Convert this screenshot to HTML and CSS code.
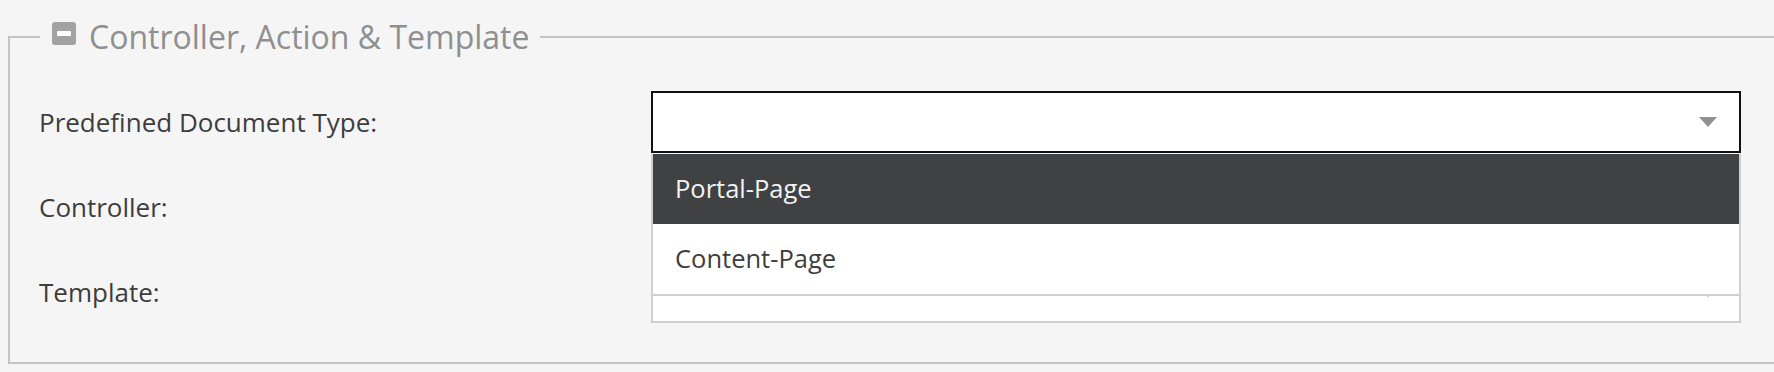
FILE: index.html
```html
<!DOCTYPE html>
<html lang="en">
<head>
<meta charset="utf-8">
<title>Controller, Action &amp; Template</title>
<link rel="stylesheet" href="styles.css">
</head>
<body>
<fieldset class="panel">
  <legend class="panel-legend">
    <span class="collapse-icon"><span class="collapse-bar"></span></span>
    <span class="panel-title">Controller, Action &amp; Template</span>
  </legend>
  <div class="form-grid">
    <label class="field-label">Predefined Document Type:</label>
    <div class="field-wrap">
      <div class="select select-focused"><span class="select-arrow"></span></div>
      <ul class="dropdown">
        <li class="dropdown-item dropdown-item-active">Portal-Page</li>
        <li class="dropdown-item">Content-Page</li>
      </ul>
    </div>
    <label class="field-label">Controller:</label>
    <div class="field-wrap">
      <div class="select"><span class="select-arrow"></span></div>
    </div>
    <label class="field-label">Template:</label>
    <div class="field-wrap">
      <div class="select"><span class="select-arrow"></span></div>
    </div>
  </div>
</fieldset>
</body>
</html>
```
FILE: styles.css
```css
html, body {
  margin: 0;
  padding: 0;
  background: #f5f5f5;
  overflow: hidden;
}

body {
  font-family: "Open Sans", "Noto Sans", sans-serif;
  color: #3d3d3d;
  padding-top: 17px;
}

.panel {
  box-sizing: border-box;
  width: calc(100vw - 4px);
  margin: 0 0 0 8px;
  padding: 34px 35px 39px 29px;
  border: 2px solid #c4c4c4;
  min-width: 0;
}

.panel-legend {
  display: flex;
  align-items: flex-start;
  margin-left: 1px;
  padding: 0 11px 0 12px;
  height: 40px;
}

.collapse-icon {
  display: flex;
  align-items: center;
  justify-content: center;
  width: 24px;
  height: 23px;
  margin-top: 5px;
  border-radius: 3px;
  background: #a2a2a2;
}

.collapse-bar {
  display: block;
  width: 14px;
  height: 5px;
  background: #ffffff;
  border-radius: 1px;
}

.panel-title {
  margin-left: 13px;
  font-size: 32px;
  line-height: 40px;
  color: #8f8f8f;
}

.form-grid {
  display: grid;
  grid-template-columns: 612px 1fr;
  row-gap: 23px;
  align-items: center;
}

.field-label {
  font-size: 26px;
  line-height: 36px;
  color: #3d3d3d;
}

.field-wrap {
  position: relative;
}

.select {
  box-sizing: border-box;
  height: 62px;
  display: flex;
  align-items: center;
  justify-content: flex-end;
  padding-right: 22px;
  background: #ffffff;
  border: 2px solid #cfcfcf;
}

.select-focused {
  border-color: #111111;
}

.select-arrow {
  width: 0;
  height: 0;
  border-left: 9px solid transparent;
  border-right: 9px solid transparent;
  border-top: 10px solid #919191;
}

.dropdown {
  position: absolute;
  top: calc(100% + 1px);
  left: 0;
  right: 0;
  z-index: 2;
  margin: 0;
  padding: 0;
  list-style: none;
  background: #ffffff;
  border: 2px solid #cfcfcf;
  border-top: 0;
}

.dropdown-item {
  height: 70px;
  display: flex;
  align-items: center;
  padding: 0 0 3px 22px;
  box-sizing: border-box;
  font-size: 25.5px;
  color: #3d3d3d;
}

.dropdown-item-active {
  background: #3f4143;
  color: #f2f2f2;
}
```
